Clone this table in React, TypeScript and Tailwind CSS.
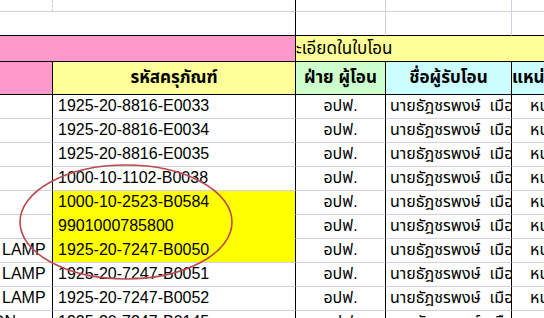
import React from "react";

type Row = { a?: string; aClass?: string; code: string; hl?: "top" | "mid" | "end" };

const rows: Row[] = [
	{ code: "1925-20-8816-E0033" },
	{ code: "1925-20-8816-E0034" },
	{ code: "1925-20-8816-E0035" },
	{ code: "1000-10-1102-B0038" },
	{ code: "1000-10-2523-B0584", hl: "top" },
	{ code: "9901000785800", hl: "mid" },
	{ a: "LAMP", code: "1925-20-7247-B0050", hl: "end" },
	{ a: "LAMP", code: "1925-20-7247-B0051" },
	{ a: "LAMP", code: "1925-20-7247-B0052" },
	{ a: "ON", aClass: "-ml-[10px]", code: "1925-20-7247-B0145" },
];

const cell = "shrink-0 overflow-hidden whitespace-nowrap border-r border-b";

const DataRow = ({ row }: { row: Row }) => {
	const codeBg = row.hl ? "bg-[#ffff00]" : "bg-white";
	const codeBottom = row.hl === "top" || row.hl === "mid" ? "border-b-[#ffff00]" : "border-b-[#d0d0de]";
	return (
		<div className="flex h-[24px]">
			<div className={`${cell} w-[53px] border-r-black border-b-[#d0d0de] flex items-end pb-[3px] pl-[2px]`}>
				<span className={row.aClass}>{row.a}</span>
			</div>
			<div className={`${cell} w-[243px] border-r-black ${codeBottom} ${codeBg} flex items-end pb-[3px] pl-[5px]`}>
				{row.code}
			</div>
			<div className={`${cell} w-[90px] border-r-black border-b-[#d0d0de] flex items-end justify-center pb-[3px]`}>
				อปฟ.
			</div>
			<div className={`${cell} w-[126px] border-r-black border-b-[#d0d0de] flex items-end pb-[3px] pl-[4px]`}>
				นายธัฎชรพงษ์&nbsp;&nbsp;เมือง
			</div>
			<div className={`${cell} w-[32px] border-r-0 border-b-[#d0d0de] flex items-end pb-[3px] pl-[18px]`}>
				หน
			</div>
		</div>
	);
};

export default function App() {
	return (
		<div className="relative w-[544px] h-[318px] overflow-hidden bg-white text-black text-[16px] leading-[18px] font-['Liberation_Sans','Tahoma','Noto_Sans_Thai','Noto_Sans',sans-serif]">
			{/* empty rows above the table */}
			<div className="flex h-[12px]">
				<div className={`${cell} w-[53px] border-r-[#c8c8dc] border-b-[#d0d0de] [border-right-style:dashed]`} />
				<div className={`${cell} w-[243px] border-r-black border-b-[#d0d0de]`} />
				<div className={`${cell} w-[90px] border-r-[#d0d0de] border-b-[#d0d0de]`} />
				<div className={`${cell} w-[126px] border-r-[#d0d0de] border-b-[#d0d0de]`} />
				<div className={`${cell} w-[32px] border-r-0 border-b-[#d0d0de]`} />
			</div>
			<div className="flex h-[24px]">
				<div className={`${cell} w-[296px] border-r-black border-b-black`} />
				<div className={`${cell} w-[90px] border-r-[#d0d0de] border-b-black`} />
				<div className={`${cell} w-[126px] border-r-[#d0d0de] border-b-black`} />
				<div className={`${cell} w-[32px] border-r-0 border-b-black`} />
			</div>

			{/* title band */}
			<div className="flex h-[26px]">
				<div className={`${cell} w-[296px] bg-[#ff99cc] border-r-black border-b-black`} />
				<div className={`${cell} w-[248px] bg-[#ffff99] border-r-0 border-b-black flex items-end pb-[3px] text-[17px]`}>
					ะเอียดในใบโอน
				</div>
			</div>

			{/* column headers */}
			<div className="flex h-[33px] font-bold text-[17px]">
				<div className={`${cell} w-[53px] bg-[#ff99cc] border-r-black border-b-black`} />
				<div className={`${cell} w-[243px] bg-[#ffff99] border-r-black border-b-black flex items-center justify-center`}>
					รหัสครุภัณฑ์
				</div>
				<div className={`${cell} w-[90px] bg-[#ccffcc] border-r-black border-b-black flex items-center justify-center`}>
					ฝ่าย ผู้โอน
				</div>
				<div className={`${cell} w-[126px] bg-[#ccffff] border-r-black border-b-black flex items-center justify-center`}>
					ชื่อผู้รับโอน
				</div>
				<div className={`${cell} w-[32px] bg-[#ccffff] border-r-0 border-b-black flex items-center`}>
					แหน่
				</div>
			</div>

			{rows.map((r, i) => (
				<DataRow key={i} row={r} />
			))}

			{/* red ring drawn over the sheet */}
			<svg className="absolute left-0 top-0 pointer-events-none" width="544" height="318">
				<ellipse cx="126" cy="222" rx="106" ry="57" fill="none" stroke="#b94a4e" strokeWidth="1.6" />
			</svg>
		</div>
	);
}
